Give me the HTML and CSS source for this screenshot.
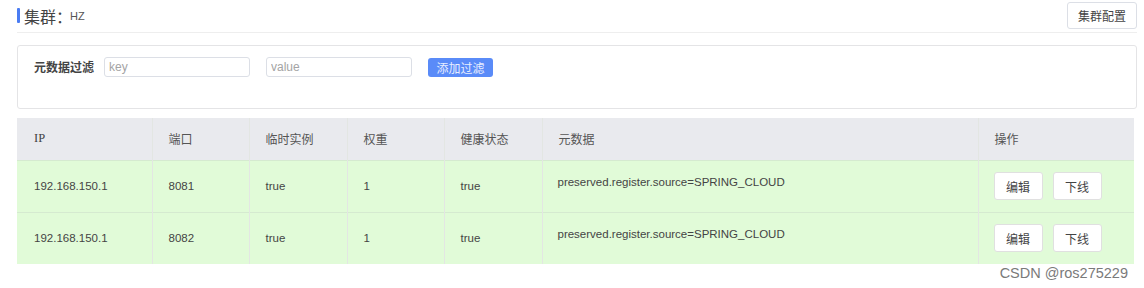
FILE: index.html
```html
<!DOCTYPE html>
<html lang="zh-CN">
<head>
<meta charset="utf-8">
<title>集群</title>
<link rel="stylesheet" href="styles.css">
</head>
<body>
<div class="page">
  <div class="topbar">
    <div class="title"><span class="title-mark"></span><span class="title-main">集群：</span><span class="title-sub">HZ</span></div>
    <button class="btn btn-cfg">集群配置</button>
  </div>
  <div class="filter-card">
    <span class="filter-label">元数据过滤</span>
    <input class="filter-input" placeholder="key">
    <input class="filter-input" placeholder="value">
    <button class="btn-primary">添加过滤</button>
  </div>
  <table class="grid">
    <thead>
      <tr>
        <th class="c-ip">IP</th>
        <th class="c-port">端口</th>
        <th class="c-eph">临时实例</th>
        <th class="c-w">权重</th>
        <th class="c-h">健康状态</th>
        <th class="c-meta">元数据</th>
        <th class="c-op">操作</th>
      </tr>
    </thead>
    <tbody>
      <tr>
        <td>192.168.150.1</td>
        <td>8081</td>
        <td>true</td>
        <td>1</td>
        <td>true</td>
        <td class="meta">preserved.register.source=SPRING_CLOUD</td>
        <td class="ops"><button class="btn btn-sm">编辑</button><button class="btn btn-sm">下线</button></td>
      </tr>
      <tr>
        <td>192.168.150.1</td>
        <td>8082</td>
        <td>true</td>
        <td>1</td>
        <td>true</td>
        <td class="meta">preserved.register.source=SPRING_CLOUD</td>
        <td class="ops"><button class="btn btn-sm">编辑</button><button class="btn btn-sm">下线</button></td>
      </tr>
    </tbody>
  </table>
  <div class="watermark">CSDN @ros275229</div>
</div>
</body>
</html>
```
FILE: styles.css
```css
* { box-sizing: border-box; }
html, body { margin: 0; padding: 0; background: #fff; }
body {
  font-family: "Noto Sans CJK SC", "Liberation Sans", sans-serif;
  color: #555;
  font-size: 12px;
}
.page {
  position: relative;
  width: 1144px;
  height: 288px;
  padding: 2px 7px 0 17px;
}
.topbar {
  display: flex;
  justify-content: space-between;
  align-items: flex-start;
  height: 31px;
  border-bottom: 1px solid #eeeeee;
}
.title {
  display: flex;
  align-items: center;
  height: 27px;
}
.title-mark {
  width: 3px;
  height: 15px;
  background: #4a7cf3;
  margin-right: 4px;
  border-radius: 1px;
}
.title-main {
  font-size: 16px;
  color: #444;
  line-height: 1;
}
.title-sub {
  font-size: 11px;
  color: #555;
  margin-left: -2px;
  font-family: "Liberation Sans", sans-serif;
}
.btn {
  font-family: "Noto Sans CJK SC", sans-serif;
  background: #fff;
  border: 1px solid #dcdfe6;
  border-radius: 3px;
  color: #444;
  font-size: 12px;
  padding: 0;
  cursor: pointer;
}
.btn-cfg {
  width: 70px;
  height: 27px;
}
.filter-card {
  margin-top: 12px;
  height: 64px;
  border: 1px solid #e4e4e6;
  border-radius: 3px;
  display: flex;
  align-items: flex-start;
  padding: 11px 0 0 16px;
}
.filter-label {
  font-weight: bold;
  color: #444;
  line-height: 20px;
  margin-right: 10px;
  height: 20px;
}
.filter-input {
  width: 146px;
  height: 20px;
  border: 1px solid #dcdfe6;
  border-radius: 3px;
  padding: 0 4px;
  font-family: "Liberation Sans", sans-serif;
  font-size: 12px;
  color: #555;
  margin-right: 16px;
  outline: none;
}
.filter-input::placeholder { color: #a4a4a4; }
.btn-primary {
  width: 65px;
  height: 19px;
  border: none;
  border-radius: 3px;
  background: #5a8bf8;
  color: #e8eeff;
  font-family: "Noto Sans CJK SC", sans-serif;
  font-size: 12px;
  padding: 0;
  margin-top: 1px;
}
.grid {
  margin-top: 9px;
  width: 1117px;
  border-collapse: collapse;
  table-layout: fixed;
}
.grid th, .grid td {
  border-right: 1px solid #e3e6e3;
  text-align: left;
  padding: 0 0 0 16px;
  font-weight: normal;
}
.grid th:last-child, .grid td:last-child { border-right: none; }
.grid th {
  background: #e9eaee;
  height: 42px;
  color: #555;
}
.grid td {
  background: #e1fbd8;
  height: 52px;
  border-top: 1px solid #d5ead0;
  font-family: "Liberation Sans", "Noto Sans CJK SC", sans-serif;
  font-size: 11.5px;
  color: #444;
}
.grid th.c-ip { width: 135px; padding-left: 17px; font-family: "Liberation Serif", serif; font-size: 12.5px; color: #444; }
.grid td:first-child { padding-left: 17px; }
.c-port { width: 97px; }
.c-eph { width: 98px; }
.c-w { width: 97px; }
.c-h { width: 98px; }
.c-meta { width: 436px; }
.c-op { width: 156px; }
.grid td.meta {
  padding-left: 15px;
  padding-bottom: 8px;
}
.grid td.ops {
  padding-left: 15px;
}
.btn-sm {
  width: 49px;
  height: 28px;
  margin-right: 10px;
  border-color: #e0e0e0;
  vertical-align: middle;
}
.watermark {
  position: absolute;
  right: 16px;
  top: 265px;
  font-family: "Liberation Sans", sans-serif;
  font-size: 14.5px;
  color: #7a7a7a;
}
```
